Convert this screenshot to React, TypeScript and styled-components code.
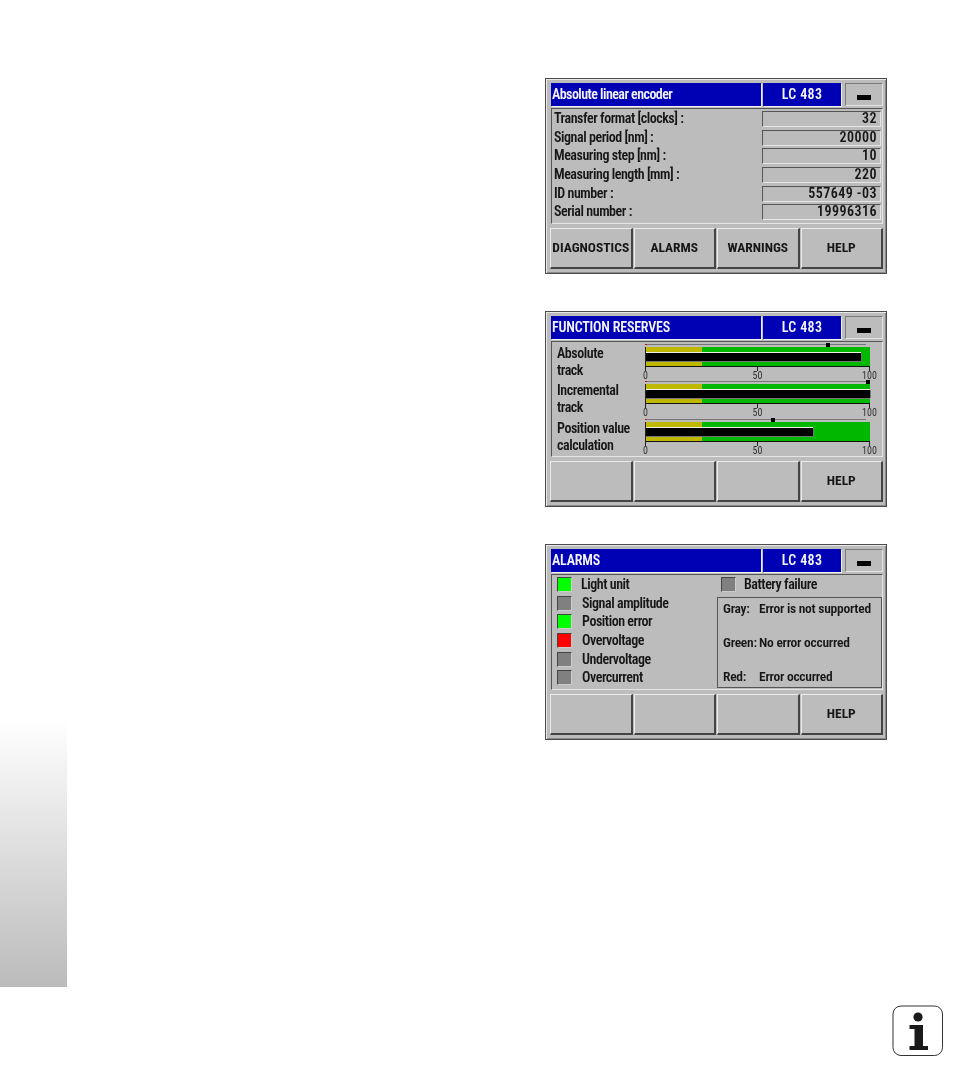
import React from 'react';
import styled, { createGlobalStyle } from 'styled-components';

const GlobalStyle = createGlobalStyle`
  html, body { margin: 0; padding: 0; background: #fff; }
  * { box-sizing: border-box; }
`;

const Page = styled.div`
  display: flex;
  width: 954px;
  height: 1090px;
  overflow: hidden;
  font-family: Roboto, "Liberation Sans", Arial, sans-serif;
  font-stretch: 75%;
  font-weight: 600;
  color: #161616;
`;

const SideTab = styled.div`
  flex: none;
  width: 67px;
  height: 267px;
  margin-top: 720px;
  background: linear-gradient(to bottom, #ffffff 0%, #bbbbbb 100%);
`;

const Main = styled.div`
  display: flex;
  flex-direction: column;
  gap: 37px;
  width: 398px;
  margin-left: 478px;
  padding-top: 78px;
`;

const Panel = styled.section`
  width: 342px;
  height: 196px;
  padding: 4px 3px 4px 5px;
  background: #bcbcbc;
  border: 1px solid #4c4c4c;
  box-shadow: inset 1px 1px 0 #e8e8e8, inset -1px -1px 0 #8a8a8a;
  filter: blur(0.3px);
`;

const Header = styled.header`
  display: flex;
  gap: 2px;
  height: 23px;
`;

const TitleCell = styled.div<{ $width: number; $center?: boolean; $spacing: number }>`
  flex: none;
  width: ${p => p.$width}px;
  display: flex;
  align-items: center;
  justify-content: ${p => (p.$center ? 'center' : 'flex-start')};
  padding: 0 0 2px ${p => (p.$center ? 0 : 1)}px;
  background: #0000b4;
  color: #f4f4ff;
  font-size: 14px;
  letter-spacing: ${p => p.$spacing}px;
  box-shadow: 1px 1px 0 #f0f0f0;
`;

const Indicator = styled.div`
  flex: none;
  width: 38px;
  margin-left: 2px;
  display: flex;
  align-items: flex-end;
  justify-content: center;
  padding-bottom: 5px;
  border: 1px solid;
  border-color: #7a7a7a #e4e4e4 #e4e4e4 #7a7a7a;

  &::after {
    content: '';
    width: 14px;
    height: 5px;
    background: #000;
  }
`;

const Content = styled.div`
  position: relative;
  height: 116px;
  margin-top: 2px;
  padding: 2px 1px 0;
  border: 1px solid;
  border-color: #555 #e6e6e6 #e6e6e6 #555;
`;

const InfoGrid = styled.dl`
  display: grid;
  grid-template-columns: 1fr 119px;
  grid-auto-rows: 16px;
  row-gap: 2.67px;
  margin: 0;
`;

const InfoLabel = styled.dt`
  padding-left: 1px;
  font-size: 14px;
  line-height: 14px;
  letter-spacing: -0.45px;
  white-space: nowrap;
`;

const InfoValue = styled.dd`
  margin: 0;
  padding-right: 3px;
  font-size: 14px;
  line-height: 13px;
  letter-spacing: 0.45px;
  text-align: right;
  white-space: nowrap;
  border: 1px solid;
  border-color: #555 #e6e6e6 #e6e6e6 #555;
`;

const MeterRow = styled.div`
  display: grid;
  grid-template-columns: 88px 225px;
  height: 37.4px;
  padding-left: 4px;
`;

const MeterLabel = styled.div`
  padding-top: 1px;
  font-size: 14px;
  line-height: 17px;
  letter-spacing: -0.45px;
  white-space: nowrap;
`;

const Meter = styled.div`
  display: flex;
  flex-direction: column;
`;

const MarkerLine = styled.div`
  position: relative;
  width: 221px;
  height: 3px;
  border-top: 1px solid #777;

  &::before {
    content: '';
    position: absolute;
    left: 0;
    top: -1px;
    width: 2px;
    height: 1px;
    background: #d01010;
  }
`;

const Marker = styled.i`
  position: absolute;
  top: -2px;
  width: 4px;
  height: 4px;
  margin-left: -2px;
  background: #000;
`;

const Bar = styled.div`
  height: 20px;
  padding-top: 6px;
  background: linear-gradient(to right, #bfb800 25%, #00b800 25%);
  border-left: 1px solid #222;
  border-bottom: 1px solid #111;
`;

const BarFill = styled.div`
  height: 8px;
  background: #000;
  box-shadow: 0 -1px 0 #f0f0e0, 1px 0 0 #777, 0 1px 0 #777;
`;

const Axis = styled.div`
  display: flex;
  justify-content: space-between;
`;

const Tick = styled.div`
  display: flex;
  flex-direction: column;
  align-items: center;
  width: 1px;
  font-size: 10px;
  font-stretch: 85%;
  line-height: 9px;
  font-weight: 400;
  color: #333;

  &::before {
    content: '';
    flex: none;
    width: 1px;
    height: 4px;
    background: #222;
  }
`;

const AlarmBody = styled.div`
  display: grid;
  grid-template-columns: 164px 165px;
  height: 100%;
`;

const LedList = styled.ul`
  display: flex;
  flex-direction: column;
  gap: 3.67px;
  margin: 0;
  padding: 0 0 0 4px;
  list-style: none;
`;

const LedRow = styled.li<{ $gap?: number }>`
  display: flex;
  align-items: flex-start;
  gap: ${p => p.$gap ?? 10}px;
  height: 15px;
  font-size: 14px;
  line-height: 15px;
  letter-spacing: -0.45px;
  white-space: nowrap;
`;

const Led = styled.span<{ $color: string }>`
  flex: none;
  width: 15px;
  height: 15px;
  background: ${p => p.$color};
  border: 1px solid;
  border-color: #444 #ccc #ccc #444;
`;

const AlarmSide = styled.div`
  display: flex;
  flex-direction: column;
`;

const BatteryRow = styled.div`
  padding: 0 0 5px 4px;
`;

const Legend = styled.div`
  display: flex;
  flex-direction: column;
  justify-content: space-between;
  height: 91px;
  padding: 2px 0 3px 5px;
  border: 1px solid #555;
  font-size: 13.5px;
  line-height: 16px;
  letter-spacing: -0.25px;
  white-space: nowrap;
`;

const LegendKey = styled.span`
  display: inline-block;
  width: 36px;
`;

const SoftKeys = styled.div`
  display: grid;
  grid-template-columns: repeat(4, minmax(0, 1fr));
  gap: 1px;
  height: 41px;
  margin: 4px 0 0 -1px;
`;

const SoftKey = styled.button`
  padding: 0 0 2px;
  background: #bcbcbc;
  color: #161616;
  font: inherit;
  font-stretch: 75%;
  font-size: 13.5px;
  font-weight: 700;
  border: 1px solid;
  border-color: #ececec #444 #444 #ececec;
  border-width: 1px 2px 2px 1px;
`;

const InfoMark = styled.svg`
  display: block;
  flex: none;
  width: 52px;
  height: 52px;
  margin: 228px 0 0 347px;
`;

const infoRows = [
  ['Transfer format [clocks] :', '32'],
  ['Signal period [nm] :', '20000'],
  ['Measuring step [nm] :', '10'],
  ['Measuring length [mm] :', '220'],
  ['ID number :', '557649 -03'],
  ['Serial number :', '19996316'],
];

const meters = [
  { lines: ['Absolute', 'track'], marker: 82.8, fill: 96 },
  { lines: ['Incremental', 'track'], marker: 100.9, fill: 100 },
  { lines: ['Position value', 'calculation'], marker: 57.9, fill: 74.5 },
];

const GREEN = '#00ff00';
const GRAY = '#808080';
const RED = '#ff0000';

const leds = [
  { name: 'Light unit', color: GREEN, gap: 9 },
  { name: 'Signal amplitude', color: GRAY },
  { name: 'Position error', color: GREEN },
  { name: 'Overvoltage', color: RED },
  { name: 'Undervoltage', color: GRAY },
  { name: 'Overcurrent', color: GRAY },
];

const ScreenHeader: React.FC<{ title: string; spacing: number }> = ({ title, spacing }) => (
  <Header>
    <TitleCell $width={210} $spacing={spacing}>{title}</TitleCell>
    <TitleCell $width={78} $spacing={0.35} $center>LC 483</TitleCell>
    <Indicator />
  </Header>
);

const Keys: React.FC<{ labels: string[] }> = ({ labels }) => (
  <SoftKeys>
    {labels.map((label, i) => (
      <SoftKey key={i}>{label}</SoftKey>
    ))}
  </SoftKeys>
);

export default function App() {
  return (
    <Page>
      <GlobalStyle />
      <SideTab />
      <Main>
        <Panel>
          <ScreenHeader title="Absolute linear encoder" spacing={-0.55} />
          <Content>
            <InfoGrid>
              {infoRows.map(([label, value]) => (
                <React.Fragment key={label}>
                  <InfoLabel>{label}</InfoLabel>
                  <InfoValue>{value}</InfoValue>
                </React.Fragment>
              ))}
            </InfoGrid>
          </Content>
          <Keys labels={['DIAGNOSTICS', 'ALARMS', 'WARNINGS', 'HELP']} />
        </Panel>

        <Panel>
          <ScreenHeader title="FUNCTION RESERVES" spacing={-0.2} />
          <Content>
            {meters.map(m => (
              <MeterRow key={m.lines[0]}>
                <MeterLabel>
                  {m.lines[0]}
                  <br />
                  {m.lines[1]}
                </MeterLabel>
                <Meter>
                  <MarkerLine>
                    <Marker style={{ left: `${m.marker}%` }} />
                  </MarkerLine>
                  <Bar>
                    <BarFill style={{ width: `${m.fill}%` }} />
                  </Bar>
                  <Axis>
                    <Tick>0</Tick>
                    <Tick>50</Tick>
                    <Tick>100</Tick>
                  </Axis>
                </Meter>
              </MeterRow>
            ))}
          </Content>
          <Keys labels={['', '', '', 'HELP']} />
        </Panel>

        <Panel>
          <ScreenHeader title="ALARMS" spacing={-0.2} />
          <Content>
            <AlarmBody>
              <LedList>
                {leds.map(l => (
                  <LedRow key={l.name} $gap={l.gap}>
                    <Led $color={l.color} />
                    {l.name}
                  </LedRow>
                ))}
              </LedList>
              <AlarmSide>
                <BatteryRow>
                  <LedRow as="div" $gap={8}>
                    <Led $color={GRAY} />
                    Battery failure
                  </LedRow>
                </BatteryRow>
                <Legend>
                  <div><LegendKey>Gray:</LegendKey>Error is not supported</div>
                  <div><LegendKey>Green:</LegendKey>No error occurred</div>
                  <div><LegendKey>Red:</LegendKey>Error occurred</div>
                </Legend>
              </AlarmSide>
            </AlarmBody>
          </Content>
          <Keys labels={['', '', '', 'HELP']} />
        </Panel>

        <InfoMark viewBox="0 0 52 52" aria-hidden="true">
          <rect x="1" y="1" width="49.5" height="49.5" rx="8" fill="#fff" stroke="#333" strokeWidth="1" />
          <circle cx="26" cy="12" r="4.6" fill="#1a1a1a" />
          <path d="M17.5 20H31V41H36V45H17.5V41H22.5V24H17.5Z" fill="#1a1a1a" />
        </InfoMark>
      </Main>
    </Page>
  );
}
